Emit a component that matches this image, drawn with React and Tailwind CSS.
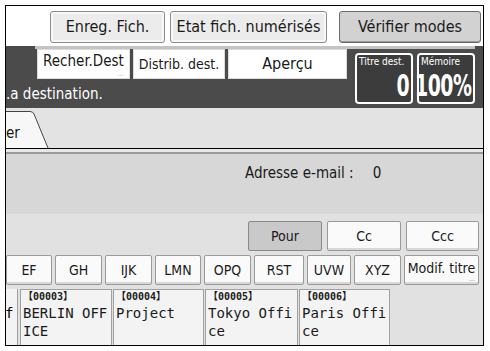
import React from "react";

const font = { fontFamily: '"DejaVu Sans Condensed", "Liberation Sans", sans-serif' };
const mono = { fontFamily: '"DejaVu Sans Mono", "Noto Sans CJK JP", "Liberation Mono", monospace' };

function TopButton({ w, dark, children }) {
    return (
        <div
            className={
                "flex h-[32px] items-center justify-center rounded-[3px] border text-[16px] text-[#1a1a1a] " +
                (dark
                    ? "border-[#6a6a6a] bg-[#d2d2d2] shadow-[inset_0_-1px_0_#9a9a9a]"
                    : "border-[#8c8c8c] bg-[#ececec] shadow-[inset_0_0_0_2px_#f8f8f8]")
            }
            style={{ width: w }}
        >
            {children}
        </div>
    );
}

function BandButton({ w, size, children, dots }) {
    return (
        <div
            className={
                "relative flex h-[30px] items-center justify-center border border-[#dcdcdc] bg-white text-[#1a1a1a]" +
                (dots ? " pb-[5px]" : "")
            }
            style={{ width: w, fontSize: size }}
        >
            <span className="leading-[16px]">{children}</span>
            {dots && <span className="absolute bottom-[1px] right-[6px] text-[6px] leading-[6px] text-[#777]">...</span>}
        </div>
    );
}

function Counter({ label, value }) {
    return (
        <div className="flex h-[51px] w-[58px] flex-col rounded-[4px] border-2 border-white bg-[#3c3c3c] px-[2px] text-white">
            <span className="text-[10px] leading-[13px]">{label}</span>
            <div className="mt-auto flex justify-end">
                <span className="inline-block origin-right scale-x-[0.7] whitespace-nowrap text-[30px] font-bold leading-[32px] tracking-tight">
                    {value}
                </span>
            </div>
        </div>
    );
}

function KeyButton({ w, active, children, dots }) {
    return (
        <div
            className={
                "relative flex h-[30px] items-center justify-center rounded-[2px] border text-[14px] text-[#1a1a1a] " +
                (active
                    ? "border-[#8a8a8a] bg-[#c9c9c9]"
                    : "border-[#9a9a9a] bg-[#fafafa] shadow-[inset_0_-2px_0_#d8d8d8]") +
                (dots ? " pb-[4px]" : "")
            }
            style={{ width: w }}
        >
            {children}
            {dots && <span className="absolute bottom-[1px] right-[3px] text-[7px] leading-[7px] text-[#777]">...</span>}
        </div>
    );
}

function Card({ w, code, lines }) {
    return (
        <div className="flex h-[56px] flex-col border border-b-0 border-[#a0a0a0] bg-[#f3f3f3] px-[2px] text-[#1a1a1a]" style={{ width: w }}>
            <span className="text-[10px] font-bold leading-[14px]" style={mono}>
                【{code}】
            </span>
            {lines.map((l) => (
                <span key={l} className="text-[14px] leading-[18px]" style={mono}>
                    {l}
                </span>
            ))}
        </div>
    );
}

export default function App() {
    const letters = [
        ["GH", 47],
        ["IJK", 47],
        ["LMN", 46],
        ["OPQ", 47],
        ["RST", 50],
        ["UVW", 44],
        ["XYZ", 47],
    ];

    return (
        <div className="h-[351px] w-[490px] overflow-hidden bg-white pl-[5px] pt-[5px]" style={font}>
            <div className="flex h-[341px] w-[479px] flex-col overflow-hidden border border-black">
                {/* Top buttons */}
                <div className="flex h-[40px] items-start bg-white pl-[44px] pt-[5px]">
                    <TopButton w={115}>Enreg. Fich.</TopButton>
                    <div className="ml-[5px]">
                        <TopButton w={157}>Etat fich. numérisés</TopButton>
                    </div>
                    <div className="ml-[12px]">
                        <TopButton w={142} dark>
                            Vérifier modes
                        </TopButton>
                    </div>
                </div>

                {/* Dark band */}
                <div className="flex h-[62px] flex-col bg-[#4b4b4b]">
                    <div className="ml-[29px] mr-[8px] h-[3px] bg-[#c4c4c4]" />
                    <div className="flex">
                        <div className="flex flex-col">
                            <div className="flex gap-[3px] pl-[31px]">
                                <BandButton w={93} size={15} dots>
                                    Recher.Dest
                                </BandButton>
                                <BandButton w={92} size={14}>
                                    Distrib. dest.
                                </BandButton>
                                <BandButton w={119} size={16}>
                                    Aperçu
                                </BandButton>
                            </div>
                            <span className="pt-[6px] text-[15px] leading-[18px] text-white">.a destination.</span>
                        </div>
                        <div className="ml-[8px] mt-[4px] flex gap-[4px]">
                            <Counter label="Titre dest." value="0" />
                            <Counter label="Mémoire" value="100%" />
                        </div>
                    </div>
                </div>

                {/* Tab strip */}
                <div className="flex h-[41px] items-end bg-[#e3e3e3]">
                    <div className="relative h-[37px] w-[44px]">
                        <svg className="absolute inset-0" width="44" height="37" viewBox="0 0 44 37">
                            <path d="M0 0 H24 Q27 0 28 3 L42 37 H0 Z" fill="#f7f7f7" />
                            <path d="M0 0.5 H24 Q27 0.5 28 3 L42 37" fill="none" stroke="#444" strokeWidth="1" />
                        </svg>
                        <span className="relative block pt-[14px] text-[15px] leading-[16px] text-[#1a1a1a]">er</span>
                    </div>
                </div>
                <div className="h-[1px] bg-black" />
                <div className="h-[3px] bg-[#e8e8e8]" />
                <div className="h-[2px] bg-[#9a9a9a]" />

                {/* Address area */}
                <div className="flex h-[60px] items-start bg-[#d7d7d7] pl-[239px] pt-[8px] text-[15px] text-[#1a1a1a]">
                    <span>Adresse e-mail :</span>
                    <span className="ml-[19px]">0</span>
                </div>

                {/* Lower area */}
                <div className="flex flex-1 flex-col bg-[#e1e1e1]">
                    <div className="flex gap-[5px] pl-[242px] pt-[7px]">
                        <KeyButton w={74} active>
                            Pour
                        </KeyButton>
                        <KeyButton w={74}>Cc</KeyButton>
                        <KeyButton w={73}>Ccc</KeyButton>
                    </div>
                    <div className="mt-[4px] flex gap-[3px]">
                        <KeyButton w={46}>EF</KeyButton>
                        {letters.map(([l, w]) => (
                            <KeyButton key={l} w={w}>
                                {l}
                            </KeyButton>
                        ))}
                        <KeyButton w={75} dots>
                            Modif. titre
                        </KeyButton>
                    </div>
                    <div className="mt-[4px] flex">
                        <div className="flex h-[56px] w-[12px] items-start border-r border-[#a0a0a0] bg-[#f3f3f3] pt-[14px] text-[14px]" style={mono}>
                            <span className="-ml-[1px]">f</span>
                        </div>
                        <div className="ml-[2px] flex gap-[1px]">
                            <Card w={92} code="00003" lines={["BERLIN OFF", "ICE"]} />
                            <Card w={91} code="00004" lines={["Project"]} />
                            <Card w={93} code="00005" lines={["Tokyo Offi", "ce"]} />
                            <Card w={91} code="00006" lines={["Paris Offi", "ce"]} />
                        </div>
                    </div>
                </div>
            </div>
        </div>
    );
}
